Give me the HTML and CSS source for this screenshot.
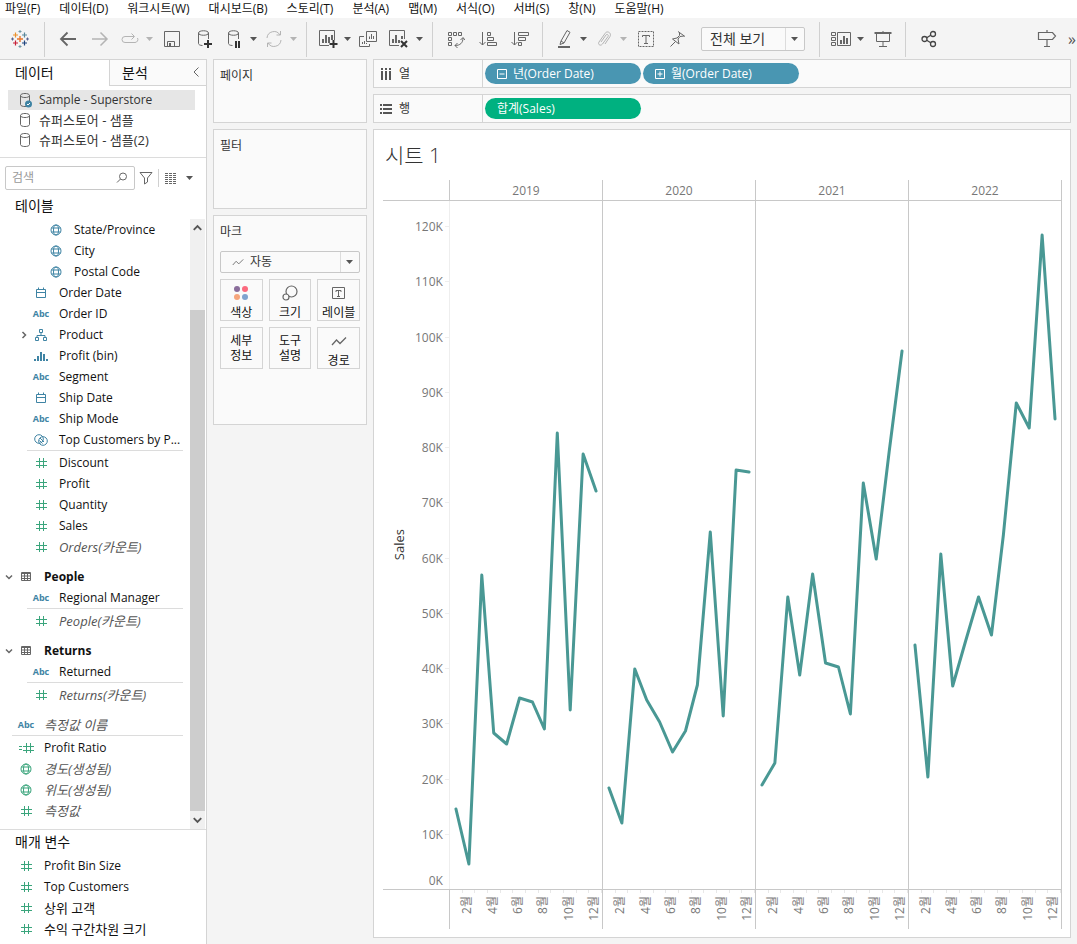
FILE: index.html
```html
<!DOCTYPE html>
<html lang="ko">
<head>
    <meta charset="UTF-8">
    <meta name="viewport" content="width=device-width, initial-scale=1.0">
    <title>시트 1</title>
    <link rel="stylesheet" href="styles.css">
</head>
<body>
    <!-- Shared icons -->
    <svg class="sprite" aria-hidden="true">
        <symbol id="caret" viewBox="0 0 8 4"><path d="M0 0h7L3.5 4z" fill="currentColor"/></symbol>
        <symbol id="globe" viewBox="0 0 12 12"><g fill="none" stroke="currentColor"><circle cx="6" cy="6" r="5"/><ellipse cx="6" cy="6" rx="2.5" ry="5"/><path d="M1.5 4h9M1.5 8h9"/></g></symbol>
        <symbol id="date" viewBox="0 0 12 12"><path d="M1.5 2.5h9v8h-9zM1.5 5.5h9M3.5 .5v2M8.5 .5v2" fill="none" stroke="currentColor"/></symbol>
        <symbol id="tree" viewBox="0 0 12 12"><path d="M4.5 .5h3v3h-3zM.5 8.5h3v3h-3zM8.5 8.5h3v3h-3zM6 3.5v3M2 8V6.5h8V8" fill="none" stroke="currentColor"/></symbol>
        <symbol id="bin" viewBox="0 0 14 12"><path d="M0 9h2v2H0zM3 6h2v5H3zM6 2h2v9H6zM9 4h2v7H9zM12 9h2v2h-2z" fill="currentColor"/></symbol>
        <symbol id="set" viewBox="0 0 14 12"><g fill="none" stroke="currentColor"><circle cx="5" cy="5" r="4.3"/><circle cx="9" cy="7" r="4.3"/><path d="M6 4l4 4M5.5 6.5l3 3"/></g></symbol>
        <symbol id="hash" viewBox="0 0 12 12"><path d="M4.5 1v10M8.5 1v10M1 4.5h11M1 8.5h11" fill="none" stroke="currentColor"/></symbol>
        <symbol id="calc" viewBox="0 0 16 12"><path d="M8.5 1v10M12.5 1v10M5 4.5h11M5 8.5h11M1 4.5h3M1 7.5h3" fill="none" stroke="currentColor"/></symbol>
        <symbol id="table" viewBox="0 0 12 12"><path d="M1.5 1.5h9v8h-9zM1 2.5h10M1 5h10M1 7.5h10M4.5 2v8M7.5 2v8" fill="none" stroke="currentColor"/></symbol>
        <symbol id="down" viewBox="0 0 8 8"><path d="M1 2.5l3 3 3-3" fill="none" stroke="currentColor" stroke-width="1.5"/></symbol>
        <symbol id="right" viewBox="0 0 8 8"><path d="M2.5 1l3 3-3 3" fill="none" stroke="currentColor" stroke-width="1.5"/></symbol>
        <symbol id="database" viewBox="0 0 14 16"><path d="M2.5 3.5v9c0 2.7 9 2.7 9 0v-9M2.5 3.5c0-2.7 9-2.7 9 0s-9 2.7-9 0z" fill="none" stroke="#666"/></symbol>
        <symbol id="zigzag" viewBox="0 0 16 10"><path d="M1 9l4.5-5 3.5 3.5L15 1.5" fill="none" stroke="currentColor" stroke-width="1.3"/></symbol>
    </svg>

    <nav class="menubar">
        <a href="#">파일(F)</a>
        <a href="#">데이터(D)</a>
        <a href="#">워크시트(W)</a>
        <a href="#">대시보드(B)</a>
        <a href="#">스토리(T)</a>
        <a href="#">분석(A)</a>
        <a href="#">맵(M)</a>
        <a href="#">서식(O)</a>
        <a href="#">서버(S)</a>
        <a href="#">창(N)</a>
        <a href="#">도움말(H)</a>
    </nav>

    <header class="toolbar">
        <div class="tool-group logo-group">
            <button class="tool" aria-label="시작 페이지">
                <svg width="18" height="18" viewBox="0 0 18 18" fill="none">
                    <path d="M9 6v6M6 9h6" stroke="#e8762c" stroke-width="1.4"/>
                    <path d="M4.5 2.5v5M2 5h5" stroke="#eb912c" stroke-width="1.2"/>
                    <path d="M13.5 2.5v5M11 5h5" stroke="#59879b" stroke-width="1.2"/>
                    <path d="M4.5 10.5v5M2 13h5" stroke="#c72037" stroke-width="1.2"/>
                    <path d="M13.5 10.5v5M11 13h5" stroke="#1f447e" stroke-width="1.2"/>
                    <path d="M9 0v3M7.5 1.5h3M9 15v3M7.5 16.5h3" stroke="#7099a6"/>
                    <path d="M1.5 7.5v3M0 9h3M16.5 7.5v3M15 9h3" stroke="#5b6591"/>
                </svg>
            </button>
        </div>
        <div class="tool-group">
            <button class="tool" aria-label="뒤로">
                <svg width="18" height="16" viewBox="0 0 18 16"><path d="M17 8H2M8.5 1.5L2 8l6.5 6.5" stroke-width="1.8"/></svg>
            </button>
            <button class="tool disabled" aria-label="앞으로">
                <svg width="18" height="16" viewBox="0 0 18 16"><path d="M1 8h15M9.5 1.5L16 8l-6.5 6.5" stroke-width="1.5"/></svg>
            </button>
            <button class="tool narrow disabled" aria-label="다시 실행">
                <svg width="18" height="14" viewBox="0 0 18 14"><path d="M13 4.5H4a3 3 0 0 0 0 6h10a3 3 0 0 0 2.5-4.5M10.5 1.5l3 3-3 3"/></svg>
            </button>
            <button class="caret disabled" aria-label="다시 실행 옵션"><svg class="caret-icon"><use href="#caret"/></svg></button>
            <button class="tool" aria-label="저장">
                <svg width="18" height="18" viewBox="0 0 18 18"><path d="M1.5 1.5h15v15h-15zM4.5 16v-4.5h7V16"/><path d="M6 13h2v3H6z" fill="#666" stroke="none"/></svg>
            </button>
            <button class="tool" aria-label="새 데이터 원본">
                <svg width="18" height="20" viewBox="0 0 18 20"><path d="M3.5 4v10.5c0 1 1.5 2 4 2M13.5 4v6M3.5 4c0-3 10-3 10 0s-10 3-10 0z"/><path d="M13 11v8M9 15h8" stroke="#333" stroke-width="2"/></svg>
            </button>
            <button class="tool narrow" aria-label="자동 업데이트 일시 중지">
                <svg width="18" height="20" viewBox="0 0 18 20"><path d="M3.5 4v10.5c0 1 1.5 2 4 2M13.5 4v6M3.5 4c0-3 10-3 10 0s-10 3-10 0z"/><path d="M11 12v7M14 12v7" stroke="#333" stroke-width="2"/></svg>
            </button>
            <button class="caret" aria-label="자동 업데이트 옵션"><svg class="caret-icon"><use href="#caret"/></svg></button>
            <button class="tool narrow disabled" aria-label="업데이트 실행">
                <svg width="18" height="18" viewBox="0 0 18 18"><path d="M2 8a7 7 0 0 1 13-3M16 10a7 7 0 0 1-13 3M15.5 1v4h-4M2.5 17v-4h4"/></svg>
            </button>
            <button class="caret disabled" aria-label="업데이트 옵션"><svg class="caret-icon"><use href="#caret"/></svg></button>
        </div>
        <div class="tool-group">
            <button class="tool narrow" aria-label="새 워크시트">
                <svg width="20" height="20" viewBox="0 0 20 20"><path d="M11 16.5H1.5v-15h15V11"/><path d="M4 10h2v4H4zM7 6h2v8H7zM10 8h2v6h-2zM13 6h2v5h-2z" fill="#666" stroke="none"/><path d="M15.5 11v8M11.5 15h8" stroke="#333" stroke-width="2"/></svg>
            </button>
            <button class="caret" aria-label="새 워크시트 옵션"><svg class="caret-icon"><use href="#caret"/></svg></button>
            <button class="tool narrow" aria-label="복제">
                <svg width="18" height="18" viewBox="0 0 18 18"><path d="M7.5 1.5h10v10h-10zM5 6.5H.5v10h10V14M10.5 9V6.5M12.5 9V4M14.5 9V6M3.5 14v-2M5.5 14v-3M7.5 14v-1"/></svg>
            </button>
            <button class="tool" aria-label="시트 지우기">
                <svg width="20" height="20" viewBox="0 0 20 20"><path d="M11 16.5H1.5v-15h15V10"/><path d="M4 10h2v4H4zM7 6h2v8H7zM10 11h2v3h-2zM13 7h2v3h-2z" fill="#666" stroke="none"/><path d="M13 12l6 6M19 12l-6 6" stroke="#333" stroke-width="2"/></svg>
            </button>
            <button class="caret" aria-label="지우기 옵션"><svg class="caret-icon"><use href="#caret"/></svg></button>
        </div>
        <div class="tool-group">
            <button class="tool" aria-label="행과 열 바꾸기">
                <svg width="18" height="18" viewBox="0 0 18 18"><path d="M1.5 2.5h3v3h-3zM6.5 2.5h3v3h-3zM11.5 2.5h3v3h-3zM1.5 7.5h3v3h-3zM1.5 12.5h3v3h-3zM16 8c0 5-3 7.5-8 7.5M13.5 10L16 7.5l2 2.5M10.5 13L8 15.5l2.5 2.5"/></svg>
            </button>
            <button class="tool" aria-label="오름차순 정렬">
                <svg width="18" height="18" viewBox="0 0 18 18"><path d="M3.5 2v13M.5 12l3 3 3-3M8.5 2.5h3v3h-3zM8.5 7.5h6v3h-6zM8.5 12.5h9v3h-9z"/></svg>
            </button>
            <button class="tool" aria-label="내림차순 정렬">
                <svg width="18" height="18" viewBox="0 0 18 18"><path d="M3.5 2v13M.5 12l3 3 3-3M7.5 2.5h10v3h-10zM7.5 7.5h7v3h-7zM7.5 12.5h3v3h-3z"/></svg>
            </button>
        </div>
        <div class="tool-group">
            <button class="tool narrow" aria-label="하이라이트">
                <svg width="18" height="20" viewBox="0 0 18 20"><path d="M6 12l6-10.5 3 1.8L9 14l-4 1.5zM6 12l3 2"/><path d="M3 18h12" stroke-width="2"/></svg>
            </button>
            <button class="caret" aria-label="하이라이트 옵션"><svg class="caret-icon"><use href="#caret"/></svg></button>
            <button class="tool narrow disabled" aria-label="그룹 멤버">
                <svg width="18" height="18" viewBox="0 0 18 18"><path d="M6 12l5-7c1-1.5 3 0 2 1.5L7.5 14c-2 2.500-5 .5-3.500-2L10 3.500c2-3.500 7-.5 5 3L10 14"/></svg>
            </button>
            <button class="caret disabled" aria-label="그룹 옵션"><svg class="caret-icon"><use href="#caret"/></svg></button>
            <button class="tool" aria-label="마크 레이블 표시">
                <svg width="18" height="18" viewBox="0 0 18 18"><path d="M1.5 1.5h15v15h-15z" stroke-dasharray="2 1"/><path d="M5.5 7V5.500h7V7M9 5.5V13M7 13.5h4"/></svg>
            </button>
            <button class="tool" aria-label="축 고정">
                <svg width="18" height="18" viewBox="0 0 18 18"><path d="M9 1.5l7 5M15 6l-4 .5-2 2.500 1 5L3.500 9l4.500-1 2.500-2.500v-3M6.500 11.500L1.500 16.500"/></svg>
            </button>
            <div class="select-box fit-select">
                <select aria-label="맞춤"><option>전체 보기</option></select>
                <svg class="caret-icon"><use href="#caret"/></svg>
            </div>
        </div>
        <div class="tool-group">
            <button class="tool narrow" aria-label="카드 표시/숨기기">
                <svg width="22" height="16" viewBox="0 0 22 16"><path d="M1.5 1.5h4v3h-4zM1.5 6.5h4v3h-4zM1.5 11.5h4v3h-4zM7.5 1.5h13v13h-13z"/><path d="M10 9h2v4h-2zM13 5h2v8h-2zM16 7h2v6h-2z" fill="#666" stroke="none"/></svg>
            </button>
            <button class="caret" aria-label="카드 옵션"><svg class="caret-icon"><use href="#caret"/></svg></button>
            <button class="tool" aria-label="프레젠테이션 모드">
                <svg width="18" height="18" viewBox="0 0 18 18"><path d="M.5 3h17" stroke-width="2"/><path d="M2.5 4v7.5h13V4M9 1v1M9 12v4M5 16.5h8"/></svg>
            </button>
        </div>
        <div class="tool-group share-group">
            <button class="tool" aria-label="공유">
                <svg width="16" height="18" viewBox="0 0 16 18"><g stroke="#444" stroke-width="1.3"><circle cx="3.5" cy="9" r="2.5"/><circle cx="12" cy="4" r="2.5"/><circle cx="12" cy="14" r="2.5"/><path d="M5.7 7.8l4-2.5M5.7 10.2l4 2.5"/></g></svg>
            </button>
            <button class="tool guide" aria-label="데이터 가이드">
                <svg width="20" height="20" viewBox="0 0 20 20"><path d="M1.5 3.5h14l3 3.5-3 3.5h-14zM10 1v2.5M10 10.5v7M7 17.5h6" stroke-width="1.2"/></svg>
            </button>
            <button class="overflow" aria-label="더 보기">»</button>
        </div>
    </header>

    <div class="workspace">
        <aside class="data-pane">
            <div class="pane-tabs">
                <button class="pane-tab active">데이터</button>
                <button class="pane-tab">분석</button>
                <button class="collapse" aria-label="접기"><svg width="8" height="12" viewBox="0 0 8 12"><path d="M6.5 1.5L2 6l4.5 4.5"/></svg></button>
            </div>

            <ul class="sources">
                <li class="selected">
                    <svg width="14" height="16" viewBox="0 0 14 16"><use href="#database" width="14" height="16"/><circle cx="10.5" cy="12" r="3.5" fill="#3f84a4"/><path d="M9 12l1 1 2-2" fill="none" stroke="#fff"/></svg>
                    Sample - Superstore
                </li>
                <li class="korean"><svg width="14" height="16"><use href="#database"/></svg>슈퍼스토어 - 샘플</li>
                <li class="korean"><svg width="14" height="16"><use href="#database"/></svg>슈퍼스토어 - 샘플(2)</li>
            </ul>

            <div class="search-row">
                <div class="search-box">
                    <input type="text" placeholder="검색" aria-label="검색">
                    <svg width="12" height="12" viewBox="0 0 12 12"><circle cx="7" cy="4.5" r="3.5"/><path d="M4.5 7L1 10.5"/></svg>
                </div>
                <button class="filter" aria-label="필터"><svg width="14" height="14" viewBox="0 0 14 14"><path d="M1 1.5h12L8.5 7v4l-3 2V7z"/></svg></button>
                <button class="view-mode" aria-label="보기">
                    <svg width="12" height="11" viewBox="0 0 12 11"><path d="M0 .5h12M0 2.5h12M0 4.5h12M0 6.5h12M0 8.5h12M0 10.5h12" stroke-dasharray="3 1"/></svg>
                    <svg class="caret-icon"><use href="#caret"/></svg>
                </button>
            </div>

            <h2>테이블</h2>
            <div class="fields-wrap">
                <div class="fields">
                    <ul class="group">
                        <li class="deep"><svg class="icon dim"><use href="#globe"/></svg>State/Province</li>
                        <li class="deep"><svg class="icon dim"><use href="#globe"/></svg>City</li>
                        <li class="deep"><svg class="icon dim"><use href="#globe"/></svg>Postal Code</li>
                        <li><svg class="icon dim"><use href="#date"/></svg>Order Date</li>
                        <li><span class="icon abc">Abc</span>Order ID</li>
                        <li class="has-twisty"><svg class="twisty"><use href="#right"/></svg><svg class="icon dim"><use href="#tree"/></svg>Product</li>
                        <li><svg class="icon dim"><use href="#bin"/></svg>Profit (bin)</li>
                        <li><span class="icon abc">Abc</span>Segment</li>
                        <li><svg class="icon dim"><use href="#date"/></svg>Ship Date</li>
                        <li><span class="icon abc">Abc</span>Ship Mode</li>
                        <li><svg class="icon dim"><use href="#set"/></svg>Top Customers by P...</li>
                    </ul>
                    <ul class="group measures">
                        <li><svg class="icon"><use href="#hash"/></svg>Discount</li>
                        <li><svg class="icon"><use href="#hash"/></svg>Profit</li>
                        <li><svg class="icon"><use href="#hash"/></svg>Quantity</li>
                        <li><svg class="icon"><use href="#hash"/></svg>Sales</li>
                        <li><svg class="icon"><use href="#hash"/></svg><em>Orders(카운트)</em></li>
                    </ul>
                    <h3><svg class="twisty"><use href="#down"/></svg><svg class="icon"><use href="#table"/></svg>People</h3>
                    <ul class="group">
                        <li><span class="icon abc">Abc</span>Regional Manager</li>
                    </ul>
                    <ul class="group measures">
                        <li><svg class="icon"><use href="#hash"/></svg><em>People(카운트)</em></li>
                    </ul>
                    <h3><svg class="twisty"><use href="#down"/></svg><svg class="icon"><use href="#table"/></svg>Returns</h3>
                    <ul class="group">
                        <li><span class="icon abc">Abc</span>Returned</li>
                    </ul>
                    <ul class="group measures">
                        <li><svg class="icon"><use href="#hash"/></svg><em>Returns(카운트)</em></li>
                    </ul>
                    <ul class="group root spaced">
                        <li><span class="icon abc">Abc</span><em>측정값 이름</em></li>
                    </ul>
                    <ul class="group root measures">
                        <li><svg class="icon"><use href="#calc"/></svg>Profit Ratio</li>
                        <li><svg class="icon"><use href="#globe"/></svg><em>경도(생성됨)</em></li>
                        <li><svg class="icon"><use href="#globe"/></svg><em>위도(생성됨)</em></li>
                        <li><svg class="icon"><use href="#hash"/></svg><em>측정값</em></li>
                    </ul>
                </div>
                <div class="scrollbar" aria-hidden="true">
                    <svg class="scroll-arrow up"><use href="#down"/></svg>
                    <div class="scroll-gap"></div>
                    <div class="scroll-thumb"></div>
                    <svg class="scroll-arrow"><use href="#down"/></svg>
                </div>
            </div>

            <section class="parameters">
                <h2>매개 변수</h2>
                <ul class="group root">
                    <li><svg class="icon"><use href="#hash"/></svg>Profit Bin Size</li>
                    <li><svg class="icon"><use href="#hash"/></svg>Top Customers</li>
                    <li class="korean"><svg class="icon"><use href="#hash"/></svg>상위 고객</li>
                    <li class="korean"><svg class="icon"><use href="#hash"/></svg>수익 구간차원 크기</li>
                </ul>
            </section>
        </aside>

        <div class="cards">
            <section class="card pages"><h2>페이지</h2></section>
            <section class="card filters"><h2>필터</h2></section>
            <section class="card marks">
                <h2>마크</h2>
                <div class="select-box mark-select">
                    <svg class="mark-icon"><use href="#zigzag"/></svg>
                    <select aria-label="마크 유형"><option>자동</option></select>
                    <svg class="caret-icon"><use href="#caret"/></svg>
                </div>
                <div class="mark-buttons">
                    <button>
                        <svg width="16" height="16" viewBox="0 0 16 16"><circle cx="4" cy="4" r="3" fill="#8a6d9b"/><circle cx="12" cy="4" r="3" fill="#fb6a7e"/><circle cx="4" cy="12" r="3" fill="#f6a57c"/><circle cx="12" cy="12" r="3" fill="#7fa3cf"/></svg>
                        색상
                    </button>
                    <button>
                        <svg width="16" height="16" viewBox="0 0 16 16" fill="none" stroke="#666" stroke-width="1.2"><circle cx="9.5" cy="6.5" r="5.5"/><circle cx="4" cy="12" r="3" fill="#fafafa"/></svg>
                        크기
                    </button>
                    <button>
                        <svg width="16" height="16" viewBox="0 0 16 16" fill="none" stroke="#666"><path d="M1.5 2.5h12v11h-12zM5 7V5.5h5V7M7.5 5.5V11M6 11.5h3"/></svg>
                        레이블
                    </button>
                    <button>세부<br>정보</button>
                    <button>도구<br>설명</button>
                    <button>
                        <svg width="16" height="16" color="#666"><use href="#zigzag"/></svg>
                        경로
                    </button>
                </div>
            </section>
        </div>

        <main class="view">
            <div class="shelf">
                <div class="shelf-name">
                    <svg width="14" height="14" viewBox="0 0 14 14"><path d="M3 1v2M7 1v2M11 1v2M3 4v9M7 4v9M11 4v9" stroke="#555" stroke-width="2"/></svg>
                    열
                </div>
                <button class="pill dimension">
                    <svg width="10" height="10" viewBox="0 0 10 10"><path d="M.5 .5h9v9h-9zM2.5 5h5"/></svg>
                    년(Order Date)
                </button>
                <button class="pill dimension">
                    <svg width="10" height="10" viewBox="0 0 10 10"><path d="M.5 .5h9v9h-9zM2.5 5h5M5 2.5v5"/></svg>
                    월(Order Date)
                </button>
            </div>
            <div class="shelf">
                <div class="shelf-name">
                    <svg width="14" height="14" viewBox="0 0 14 14"><path d="M1 3h2M4 3h9M1 7h2M4 7h9M1 11h2M4 11h9" stroke="#555" stroke-width="2"/></svg>
                    행
                </div>
                <button class="pill measure">합계(Sales)</button>
            </div>

            <section class="sheet">
                <h1>시트 1</h1>
                <div class="chart">
                    <div class="head corner"></div>
                    <div class="head">2019</div>
                    <div class="head">2020</div>
                    <div class="head">2021</div>
                    <div class="head">2022</div>

                    <div class="y-axis">
                        <div class="axis-title">Sales</div>
                        <div class="scale">
                            <div class="ticks">
                                <span>120K</span><span>110K</span><span>100K</span><span>90K</span>
                                <span>80K</span><span>70K</span><span>60K</span><span>50K</span>
                                <span>40K</span><span>30K</span><span>20K</span><span>10K</span>
                            </div>
                            <span class="zero">0K</span>
                        </div>
                    </div>
                    <!-- One line per year, January to December -->
                    <div class="plot"><svg viewBox="0 0 153 688" preserveAspectRatio="none"><polyline points="6,608 19,663 32,374 44,532 57,543 70,497 83,501 95,528 108,232 121,509 134,253 147,290"/></svg></div>
                    <div class="plot"><svg viewBox="0 0 153 688" preserveAspectRatio="none"><polyline points="6,587 19,622 32,468 44,499 57,521 70,551 83,530 95,484 108,331 121,515 134,269 147,271"/></svg></div>
                    <div class="plot"><svg viewBox="0 0 153 688" preserveAspectRatio="none"><polyline points="6,584 19,562 32,396 44,474 57,373 70,462 83,466 95,513 108,282 121,358 134,251 147,150"/></svg></div>
                    <div class="plot"><svg viewBox="0 0 153 688" preserveAspectRatio="none"><polyline points="6,444 19,576 32,353 44,485 57,440 70,396 83,434 95,334 108,202 121,227 134,34 147,218"/></svg></div>

                    <div class="months corner"></div>
                    <div class="months"><span>2월</span><span>4월</span><span>6월</span><span>8월</span><span>10월</span><span>12월</span></div>
                    <div class="months"><span>2월</span><span>4월</span><span>6월</span><span>8월</span><span>10월</span><span>12월</span></div>
                    <div class="months"><span>2월</span><span>4월</span><span>6월</span><span>8월</span><span>10월</span><span>12월</span></div>
                    <div class="months"><span>2월</span><span>4월</span><span>6월</span><span>8월</span><span>10월</span><span>12월</span></div>
                </div>
            </section>
        </main>
    </div>
</body>
</html>
```
FILE: styles.css
```css
*, *::before, *::after {
    margin: 0;
    padding: 0;
    box-sizing: border-box;
}
body {
    min-height: 100vh;
    display: flex;
    flex-direction: column;
    background: #f4f4f4;
    color: #111;
    font-family: "Open Sans", "Noto Sans CJK KR", sans-serif;
    font-size: 12px;
    line-height: 16px;
}
ul {
    list-style: none;
}
a {
    color: inherit;
    text-decoration: none;
}
button, input, select {
    font: inherit;
    color: inherit;
    background: none;
    border: none;
}
h2 {
    font-size: 14px;
    font-weight: normal;
}
svg {
    flex: none;
}
.sprite {
    display: none;
}
.caret-icon {
    width: 8px;
    height: 4px;
    color: #555;
}

/* Menu and toolbar */
.menubar {
    display: flex;
    gap: 19px;
    height: 18px;
    padding: 1px 0 0 5px;
    background: white;
}
.toolbar {
    display: flex;
    height: 41px;
    padding: 4px 0 2px;
}
.tool-group {
    display: flex;
    align-items: center;
    padding: 0 6px 2px 7px;
    border-left: 1px solid #d0d0d0;
}
.logo-group {
    padding: 0 8px 2px 4px;
    border-left: none;
}
.tool, .caret {
    display: flex;
    align-items: center;
    justify-content: center;
    width: 32px;
    height: 32px;
}
.tool.narrow {
    width: 28px;
}
.caret {
    width: 12px;
}
.tool svg, .collapse svg, .search-row svg {
    fill: none;
    stroke: #666;
}
.search-row .caret-icon {
    stroke: none;
}
.disabled .caret-icon {
    color: #b4b4b4;
}
.tool.disabled svg {
    stroke: #b4b4b4;
}
.select-box {
    display: flex;
    align-items: center;
    border: 1px solid #c8c8c8;
    border-radius: 2px;
    background: #fafafa;
}
.select-box select {
    flex: 1;
    min-width: 0;
    height: 100%;
    appearance: none;
    border-right: 1px solid #dcdcdc;
    color: #333;
}
.select-box .caret-icon {
    margin: 0 5px;
}
.fit-select {
    width: 104px;
    height: 24px;
    margin: 0 8px 0 7px;
    font-size: 14px;
}
.fit-select select {
    padding-left: 8px;
}
.share-group {
    flex: 1;
    padding-right: 0;
}
.guide {
    margin-left: auto;
}
.overflow {
    width: 14px;
    padding-left: 4px;
    font-size: 16px;
    color: #555;
}

/* Data pane */
.workspace {
    flex: 1;
    display: grid;
    grid-template-columns: 207px 154px 1fr;
    column-gap: 6px;
    padding-right: 6px;
}
.data-pane {
    display: flex;
    flex-direction: column;
    background: white;
    border: 1px solid #d4d4d4;
    border-width: 1px 1px 0 0;
}
.pane-tabs {
    display: flex;
    height: 26px;
    font-size: 14px;
}
.pane-tab {
    width: 109px;
    padding-left: 15px;
    text-align: left;
}
.pane-tab:not(.active) {
    flex: 1;
    padding-left: 12px;
    background: #fafafa;
    border: 1px solid #d4d4d4;
    border-width: 0 0 1px 1px;
}
.collapse {
    width: 20px;
    background: #fafafa;
    border-bottom: 1px solid #d4d4d4;
}
.korean {
    font-size: 13px;
}
.sources {
    padding: 4px 11px 7px 8px;
    border-bottom: 1px solid #dcdcdc;
    color: #333;
}
.sources li {
    display: flex;
    align-items: center;
    gap: 7px;
    height: 20px;
    padding-left: 10px;
}
.sources .selected {
    background: #e6e6e6;
}
.search-row {
    display: flex;
    align-items: center;
    padding: 8px 12px 4px 5px;
}
.search-box {
    display: flex;
    align-items: center;
    width: 130px;
    height: 24px;
    padding: 0 6px;
    border: 1px solid #c8c8c8;
    border-radius: 2px;
}
.search-box input {
    flex: 1;
    min-width: 0;
    outline: none;
}
.search-box input::placeholder {
    color: #999;
}
.filter, .view-mode {
    display: flex;
    align-items: center;
    height: 18px;
    padding: 0 4px;
}
.view-mode {
    flex: 1;
    justify-content: space-between;
    margin-left: 1px;
    padding: 0 0 0 6px;
    border-left: 1px solid #d0d0d0;
}
.data-pane h2 {
    margin-bottom: 1px;
    padding-left: 15px;
    line-height: 24px;
}
.fields-wrap {
    display: flex;
    height: 610px;
}
.fields {
    flex: 1;
}
.group li, .fields h3 {
    display: flex;
    align-items: center;
    height: 21px;
    padding-left: 31px;
    white-space: nowrap;
}
.group .deep {
    padding-left: 46px;
}
.group .has-twisty {
    padding-left: 17px;
}
.root li {
    padding-left: 16px;
}
.fields h3 {
    margin-top: 9px;
    padding-left: 2px;
    font-size: 12px;
}
.spaced {
    margin-top: 9px;
}
.measures {
    position: relative;
    padding-top: 2px;
}
.measures::before {
    content: "";
    position: absolute;
    top: 0;
    left: 27px;
    right: 7px;
    border-top: 1px solid #dcdcdc;
}
.root.measures::before {
    left: 12px;
}
.icon {
    width: 20px;
    height: 12px;
    margin-right: 8px;
    color: #3aa57c;
}
.icon.dim {
    color: #3f84a4;
}
h3 .icon, .twisty {
    color: #666;
}
.abc {
    font-size: 9px;
    font-weight: 700;
    line-height: 12px;
    text-align: center;
    color: #3f84a4;
}
.twisty {
    width: 14px;
    height: 8px;
}
.group em {
    font-size: 13px;
    color: #555;
}
.scrollbar {
    display: flex;
    flex-direction: column;
    width: 15px;
    margin-right: 1px;
    background: #f0f0f0;
}
.scroll-arrow {
    width: 15px;
    height: 18px;
    padding: 4px 2px;
    color: #555;
}
.scroll-arrow.up {
    transform: rotate(180deg);
}
.scroll-gap {
    flex: 73;
}
.scroll-thumb {
    flex: 501;
    background: #cdcdcd;
}
.parameters {
    flex: 1;
    border-top: 1px solid #dcdcdc;
}

/* Cards */
.cards, .view {
    display: flex;
    flex-direction: column;
    gap: 6px;
}
.card {
    padding: 8px 6px;
    border: 1px solid #d4d4d4;
    background: #fafafa;
}
.card h2 {
    font-size: 12px;
    color: #333;
}
.pages {
    height: 64px;
}
.filters {
    height: 80px;
}
.marks {
    height: 210px;
}
.mark-select {
    height: 22px;
    margin: 11px 0 6px;
}
.mark-icon {
    width: 12px;
    height: 8px;
    margin: 0 6px 0 11px;
    color: #777;
}
.mark-buttons {
    display: grid;
    grid-template-columns: repeat(3, 1fr);
    grid-auto-rows: 42px;
    gap: 6px;
}
.mark-buttons button {
    display: flex;
    flex-direction: column;
    align-items: center;
    justify-content: flex-end;
    gap: 4px;
    border: 1px solid #d4d4d4;
    line-height: 15px;
    white-space: nowrap;
}
.mark-buttons button:nth-child(4), .mark-buttons button:nth-child(5) {
    display: block;
}

/* Shelves */
.shelf {
    display: flex;
    align-items: center;
    gap: 2px;
    height: 29px;
    border: 1px solid #d4d4d4;
    background: #fafafa;
}
.shelf-name {
    display: flex;
    align-items: center;
    gap: 6px;
    width: 109px;
    height: 100%;
    padding-left: 5px;
    border-right: 1px solid #d4d4d4;
    color: #333;
}
.pill {
    display: flex;
    align-items: center;
    gap: 6px;
    width: 156px;
    height: 21px;
    padding-left: 12px;
    border-radius: 11px;
    color: white;
}
.pill svg {
    fill: none;
    stroke: white;
}
.dimension {
    background: #4996b2;
}
.measure {
    background: #00b180;
}

/* Sheet */
.sheet {
    flex: 1;
    display: flex;
    flex-direction: column;
    margin-bottom: 6px;
    padding: 12px 8px 8px 9px;
    border: 1px solid #d4d4d4;
    background: white;
}
h1 {
    padding-left: 2px;
    margin-bottom: 12px;
    font-size: 21px;
    font-weight: 300;
    line-height: 26px;
    color: #333;
}
.chart {
    flex: 1;
    display: grid;
    grid-template-columns: 67px repeat(4, 1fr);
    grid-template-rows: 21px 1fr 40px;
    color: #777;
}
.head {
    border: 1px solid #c8c8c8;
    border-width: 0 1px 1px 0;
    line-height: 21px;
    text-align: center;
}
.y-axis {
    display: flex;
    align-items: center;
    border-right: 1px solid #eee;
}
.axis-title {
    width: 32px;
    padding: 0 8px;
    writing-mode: vertical-rl;
    transform: rotate(180deg);
    font-size: 13px;
    color: #333;
}
.scale {
    flex: 1;
    align-self: stretch;
    display: flex;
    flex-direction: column;
    padding-top: 18px;
    text-align: right;
    white-space: nowrap;
}
.ticks {
    flex: 1;
    display: flex;
    flex-direction: column;
    align-items: flex-end;
    justify-content: space-between;
}
.ticks span::after {
    content: "";
    display: inline-block;
    width: 5px;
    height: 1px;
    margin-left: 2px;
    vertical-align: 4px;
    background: #eee;
}
.zero {
    margin-top: 30px;
    padding-right: 7px;
}
.plot {
    min-height: 0;
    border-right: 1px solid #c8c8c8;
}
.plot svg {
    display: block;
    width: 100%;
    height: 100%;
}
.plot polyline {
    fill: none;
    stroke: #499894;
    stroke-width: 3;
    stroke-linejoin: round;
    stroke-linecap: round;
    vector-effect: non-scaling-stroke;
}
.months {
    display: grid;
    grid-template-columns: repeat(6, 1fr);
    justify-items: end;
    align-items: start;
    padding-top: 6px;
    border: 1px solid #c8c8c8;
    border-width: 1px 1px 0 0;
    background: repeating-linear-gradient(to right, transparent 0 calc(100% / 12 - 1px), #e8e8e8 0 calc(100% / 12)) top / 100% 3px no-repeat;
}
.months.corner {
    background: none;
}
.months span {
    writing-mode: vertical-rl;
    text-orientation: sideways;
    transform: rotate(180deg);
}
```
